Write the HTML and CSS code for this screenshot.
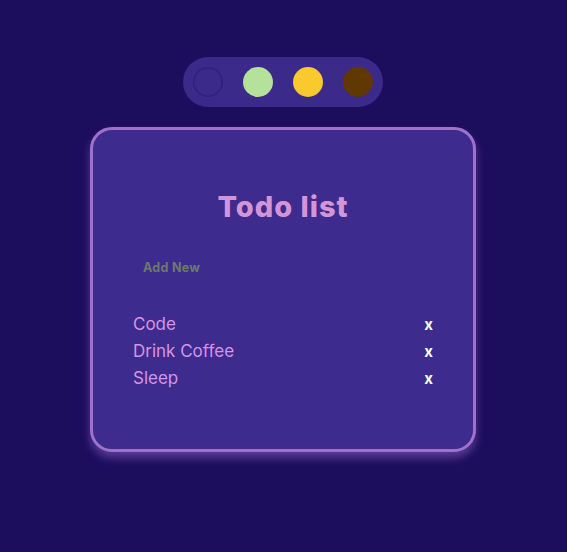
FILE: index.html
```html
<!DOCTYPE html>
<html>
<head>
<meta charset="utf-8">
<link rel="stylesheet" href="styles.css">
</head>
<body>
<div class="page">
  <div class="themes">
    <span class="dot dot-purple"></span>
    <span class="dot dot-green"></span>
    <span class="dot dot-yellow"></span>
    <span class="dot dot-brown"></span>
  </div>
  <div class="card">
    <h1 class="title">Todo list</h1>
    <div class="add">Add New</div>
    <ul class="list">
      <li class="item"><span>Code</span><span class="x">x</span></li>
      <li class="item"><span>Drink Coffee</span><span class="x">x</span></li>
      <li class="item"><span>Sleep</span><span class="x">x</span></li>
    </ul>
  </div>
</div>
</body>
</html>
```
FILE: styles.css
```css
html, body {
  margin: 0;
  padding: 0;
  background: #1d0e5d;
  font-family: "Inter", "Roboto", sans-serif;
}
.page {
  width: 566px;
  height: 552px;
  display: flex;
  flex-direction: column;
  align-items: center;
  padding-top: 57px;
  box-sizing: border-box;
}
.themes {
  display: flex;
  gap: 20px;
  padding: 10px;
  background: #3c2a8b;
  border-radius: 25px;
}
.dot {
  width: 30px;
  height: 30px;
  border-radius: 50%;
  display: block;
}
.dot-purple {
  background: #3c2a8b;
  box-shadow: inset 0 0 2px 1px rgba(25, 12, 70, 0.45);
}
.dot-green { background: #b5e19b; }
.dot-yellow { background: #f9c92e; }
.dot-brown { background: #613800; }
.card {
  margin-top: 20px;
  width: 386px;
  height: 325px;
  box-sizing: border-box;
  background: #3d2b8d;
  border: 3px solid #9d73c9;
  border-radius: 22px;
  box-shadow: 0 6px 8px rgba(160, 110, 220, 0.45);
  padding: 0 40px 0 40px;
}
.title {
  margin: 60px 0 0 0;
  text-align: center;
  font-size: 29px;
  font-weight: 800;
  color: #d495d6;
  line-height: 34px;
  letter-spacing: 1px;
}
.add {
  margin: 36px 0 0 10px;
  font-size: 12.5px;
  font-weight: 700;
  color: #6d7a6b;
  line-height: 16px;
  letter-spacing: 0.3px;
}
.list {
  list-style: none;
  margin: 35px 0 0 0;
  padding: 0;
}
.item {
  display: flex;
  justify-content: space-between;
  font-size: 17px;
  color: #d795e2;
  line-height: 27px;
}
.x {
  color: #ffffff;
  font-weight: 700;
  font-size: 15px;
}
```
